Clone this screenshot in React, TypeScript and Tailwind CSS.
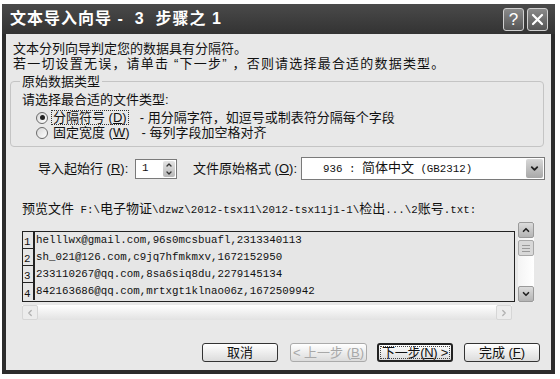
import { ChevronUp, ChevronDown, ChevronLeft, ChevronRight } from "lucide-react";
import type { ReactNode } from "react";

const MONO = "font-['Liberation_Mono',monospace] text-[10.8px]";

function Mixed({ text }: { text: string }) {
  const parts = text.split(/([\x20-\x7e]+)/).filter(Boolean);
  return (
    <>
      {parts.map((p, i) =>
        /^[\x20-\x7e]+$/.test(p) ? (
          <span key={i} className={MONO}>
            {p}
          </span>
        ) : (
          <span key={i}>{p}</span>
        )
      )}
    </>
  );
}

const previewRows = [
  "helllwx@gmail.com,96s0mcsbuafl,2313340113",
  "sh_021@126.com,c9jq7hfmkmxv,1672152950",
  "233110267@qq.com,8sa6siq8du,2279145134",
  "842163686@qq.com,mrtxgt1klnao06z,1672509942",
];

function TitleButton({ children }: { children: ReactNode }) {
  return (
    <div className="w-[21px] h-[23px] rounded-[3px] border border-[#d0d0d0] bg-linear-to-b from-[#8a8a8a] to-[#555] flex items-center justify-center text-white">
      {children}
    </div>
  );
}

function Radio({ checked }: { checked?: boolean }) {
  return (
    <div className="w-[12px] h-[12px] rounded-full border border-[#6a6a6a] bg-linear-to-br from-[#d8d8d8] to-white flex items-center justify-center">
      {checked && <div className="w-[5px] h-[5px] rounded-full bg-[#222]" />}
    </div>
  );
}

function Btn({ children, className }: { children: ReactNode; className: string }) {
  return (
    <div
      className={
        "h-[19px] rounded-[3px] bg-linear-to-b from-white to-[#dcdcdc] flex items-center justify-center whitespace-nowrap " +
        className
      }
    >
      {children}
    </div>
  );
}

export default function App() {
  return (
    <div className="w-[560px] h-[379px] bg-white pt-[4px] pl-[2px] font-['Liberation_Sans','Noto_Sans_CJK_SC',sans-serif] text-[#111]">
      <div className="w-[553px] h-[370px] bg-[#2c2c2c] flex flex-col">
        {/* title bar */}
        <div className="h-[30px] flex items-center bg-linear-to-b from-[#4a4a4a] to-[#333]">
          <div className="ml-[8px] text-white font-bold text-[16px] leading-[18px] tracking-[1px] whitespace-pre">
            文本导入向导 -  3  步骤之 1
          </div>
          <div className="ml-auto mr-[7px] flex gap-[3px]">
            <TitleButton>
              <span className="text-[17px] leading-none font-['Liberation_Sans',sans-serif]">?</span>
            </TitleButton>
            <TitleButton>
              <svg width="13" height="13" viewBox="0 0 13 13">
                <path d="M2 2 L11 11 M11 2 L2 11" stroke="white" strokeWidth="2.2" strokeLinecap="round" />
              </svg>
            </TitleButton>
          </div>
        </div>

        {/* body */}
        <div className="mx-[4px] mb-[4px] flex-1 bg-[#e8e8e8] flex flex-col text-[13px] leading-[15px]">
          <div className="pl-[7px] pt-[7px]">
            <div>文本分列向导判定您的数据具有分隔符。</div>
            <div className="whitespace-pre tracking-[1.2px]">
              若一切设置无误，请单击 “下一步” ，否则请选择最合适的数据类型。
            </div>
          </div>

          <fieldset className="mt-[3px] ml-[4px] w-[534px] border border-[#c4c4c4] rounded-[4px] pb-[6px]">
            <legend className="ml-[9px] px-[2px] leading-[15px]">原始数据类型</legend>
            <div className="pl-[11px] mt-[3px]">请选择最合适的文件类型:</div>
            <div className="mt-[3px] pl-[25px] flex items-center h-[15px]">
              <Radio checked />
              <span className="ml-[3px] border border-dotted border-[#333] px-[1px] leading-[13px]">
                分隔符号 (<u>D</u>)
              </span>
              <span className="ml-[11px]">- 用分隔字符，如逗号或制表符分隔每个字段</span>
            </div>
            <div className="pl-[25px] flex items-center h-[15px]">
              <Radio />
              <span className="ml-[4px] px-[1px]">固定宽度 (<u>W</u>)</span>
              <span className="ml-[11px]">- 每列字段加空格对齐</span>
            </div>
          </fieldset>

          <div className="mt-[10px] ml-[32px] flex items-center h-[23px]">
            <div className="w-[97px]">
              导入起始行 (<u>R</u>):
            </div>
            <div className="w-[42px] h-[20px] bg-white border border-[#7a7a7a] flex items-center pl-[6px] pr-[1px]">
              <span className={MONO}>1</span>
              <div className="ml-auto w-[12px] h-[16px] rounded-[2px] bg-linear-to-b from-[#e4e4e4] to-[#b8b8b8] flex flex-col items-center justify-center">
                <ChevronUp size={8} strokeWidth={4} className="text-[#333]" />
                <ChevronDown size={8} strokeWidth={4} className="text-[#333]" />
              </div>
            </div>
            <div className="ml-[16px] w-[108px]">
              文件原始格式 (<u>O</u>):
            </div>
            <div className="w-[244px] h-[23px] bg-white border border-[#7a7a7a] flex items-center pl-[21px] pr-[1px]">
              <span>
                <Mixed text="936 : 简体中文 (GB2312)" />
              </span>
              <div className="ml-auto w-[17px] h-[19px] rounded-[2px] bg-linear-to-b from-[#d8d8d8] to-[#a8a8a8] flex items-center justify-center">
                <ChevronDown size={11} strokeWidth={4} className="text-[#222]" />
              </div>
            </div>
          </div>

          <div className="mt-[21px] ml-[16px] leading-[16px]">
            <Mixed text="预览文件 F:\电子物证\dzwz\2012-tsx11\2012-tsx11j1-1\检出...\2账号.txt:" />
          </div>

          <div className="mt-[4px] ml-[16px] flex">
            <div className="w-[493px] flex flex-col">
              <div className="mt-[9px] h-[71px] border border-[#222] bg-[#e6e6e6] flex flex-col">
                {previewRows.map((r, i) => (
                  <div key={i} className="h-[17px] flex">
                    <div
                      className={
                        "w-[12px] border-r-2 border-[#222] flex items-end pl-[1px] " +
                        (i < 3 ? "border-b" : "")
                      }
                    >
                      <span className={MONO + " leading-[12px]"}>{i + 1}</span>
                    </div>
                    <div className={MONO + " pl-[1px] leading-[17px]"}>{r}</div>
                  </div>
                ))}
              </div>
              <div className="mt-[3px] h-[15px] w-[490px] bg-linear-to-b from-white to-[#e2e2e2] flex items-center justify-between">
                <div className="w-[16px] h-[15px] rounded-[2px] bg-[#ececec] border border-[#d6d6d6] flex items-center justify-center">
                  <ChevronLeft size={10} strokeWidth={3} className="text-[#b0b0b0]" />
                </div>
                <div className="w-[16px] h-[15px] rounded-[2px] bg-[#ececec] border border-[#d6d6d6] flex items-center justify-center">
                  <ChevronRight size={10} strokeWidth={3} className="text-[#b0b0b0]" />
                </div>
              </div>
            </div>
            <div className="ml-[3px] w-[16px] h-[80px] bg-linear-to-r from-[#f4f4f4] to-white flex flex-col">
              <div className="h-[16px] rounded-[2px] bg-linear-to-b from-[#dcdcdc] to-[#b4b4b4] border border-[#9a9a9a] flex items-center justify-center">
                <ChevronUp size={10} strokeWidth={4} className="text-[#222]" />
              </div>
              <div className="mt-[2px] h-[16px] rounded-[2px] bg-[#d8d8d8] border border-[#a8a8a8] flex flex-col items-center justify-center gap-[2px]">
                <div className="w-[8px] h-px bg-[#999]" />
                <div className="w-[8px] h-px bg-[#999]" />
                <div className="w-[8px] h-px bg-[#999]" />
              </div>
              <div className="mt-auto h-[16px] rounded-[2px] bg-linear-to-b from-[#dcdcdc] to-[#b4b4b4] border border-[#9a9a9a] flex items-center justify-center">
                <ChevronDown size={10} strokeWidth={4} className="text-[#222]" />
              </div>
            </div>
          </div>

          <div className="mt-[23px] ml-[196px] flex">
            <Btn className="w-[76px] border border-[#333]">取消</Btn>
            <Btn className="ml-[12px] w-[77px] border border-[#aaa] text-[#a8a8a8]">
              <span>
                &lt; 上一步 (<u>B</u>)
              </span>
            </Btn>
            <Btn className="ml-[10px] w-[76px] border-2 border-[#222] p-[1px]">
              <span className="block w-full h-full border border-dotted border-[#444] text-center leading-[11px] whitespace-nowrap tracking-[-0.3px]">
                下一步(<u>N</u>) &gt;
              </span>
            </Btn>
            <Btn className="ml-[11px] w-[76px] border border-[#333]">
              <span>
                完成 (<u>F</u>)
              </span>
            </Btn>
          </div>
        </div>
      </div>
    </div>
  );
}
